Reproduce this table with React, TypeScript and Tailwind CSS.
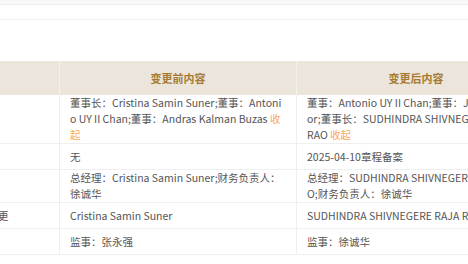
import React from "react";

type Row = { item: string; before: React.ReactNode[]; after: React.ReactNode[] };

const Fold = () => <span className="text-[#f9a85a]">收起</span>;

const rows: Row[] = [
  {
    item: "董事备案",
    before: [
      "董事长：Cristina Samin Suner;董事：Antoni",
      <>o UY II Chan;董事：Andras Kalman Buzas <span className="text-[#f9a85a]">收</span></>,
      <span className="text-[#f9a85a]">起</span>,
    ],
    after: [
      "董事：Antonio UY II Chan;董事：Jose Victor",
      "or;董事长：SUDHINDRA SHIVNEGERE RAJA",
      <>RAO <Fold /></>,
    ],
  },
  { item: "章程备案", before: ["无"], after: ["2025-04-10章程备案"] },
  {
    item: "经理备案",
    before: ["总经理：Cristina Samin Suner;财务负责人：", "徐诚华"],
    after: ["总经理：SUDHINDRA SHIVNEGERE RAJA RA", "O;财务负责人：徐诚华"],
  },
  { item: "法定代表人变更", before: ["Cristina Samin Suner"], after: ["SUDHINDRA SHIVNEGERE RAJA RAO"] },
  { item: "监事备案", before: ["监事：张永强"], after: ["监事：徐诚华"] },
];

function Lines({ lines }: { lines: React.ReactNode[] }) {
  return (
    <div className="flex flex-col">
      {lines.map((l, i) => (
        <div key={i} className="whitespace-nowrap">
          {l}
        </div>
      ))}
    </div>
  );
}

export default function App() {
  return (
    <div
      className="w-[468px] h-[264px] overflow-hidden bg-white text-[10.5px] text-[#555]"
      style={{ fontFamily: '"Noto Sans CJK SC", "Noto Sans", sans-serif' }}
    >
      <div className="h-[5px] bg-[#f8f8f8] border-b border-[#eeeeee]" />
      <div className="h-[15px] border-b border-[#f2f2f2]" />
      <div className="h-[41px]" />
      <div className="ml-[-75px] w-[610px]">
        <div className="grid grid-cols-[135px_237px_238px] bg-[#ebe5dc] h-[34px] font-bold text-[11px] text-[#a67a33]">
          <div className="flex items-center px-[10px] border-r border-[#f4f0ea] whitespace-nowrap">变更项目</div>
          <div className="flex items-center justify-center border-r border-[#f4f0ea]">变更前内容</div>
          <div className="flex items-center justify-center">变更后内容</div>
        </div>
        {rows.map((r, i) => (
          <div key={i} className="grid grid-cols-[135px_237px_238px] leading-[16px]">
            <div className="flex items-center px-[10px] min-h-[26px] border-b border-r border-[#efefef] whitespace-nowrap overflow-hidden">
              {r.item}
            </div>
            <div className="flex items-center px-[10px] min-h-[26px] border-b border-r border-[#efefef] overflow-hidden">
              <Lines lines={r.before} />
            </div>
            <div className="flex items-center px-[10px] min-h-[26px] border-b border-[#efefef] overflow-hidden">
              <Lines lines={r.after} />
            </div>
          </div>
        ))}
      </div>
    </div>
  );
}
